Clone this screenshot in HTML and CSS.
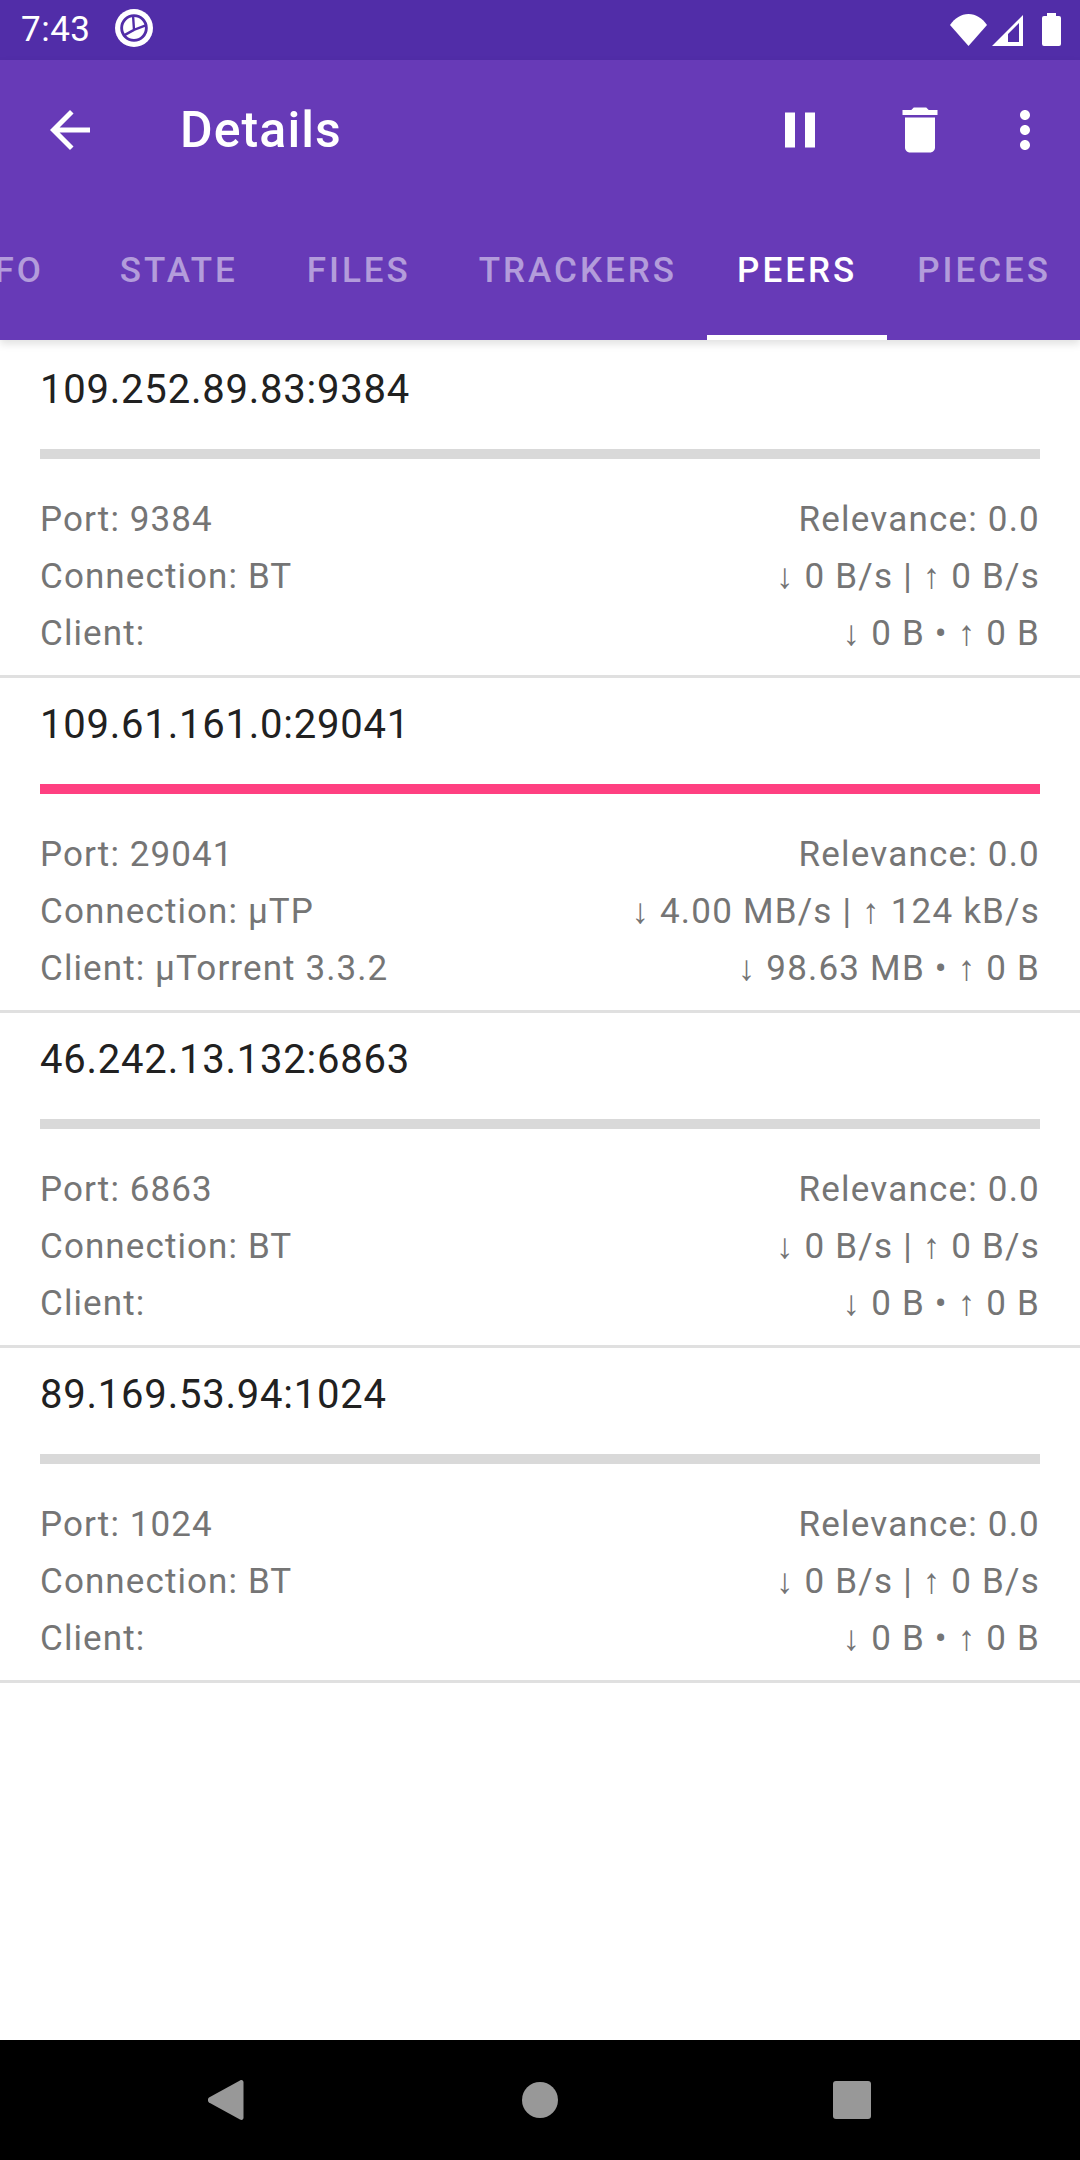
FILE: index.html
```html
<!DOCTYPE html>
<html lang="en">
<head>
    <meta charset="UTF-8">
    <meta name="viewport" content="width=device-width, initial-scale=1.0">
    <title>Details</title>
    <link rel="stylesheet" href="styles.css">
</head>
<body>
<div class="statusbar">
    <span class="time">7:43</span>
    <svg class="notif" viewBox="0 0 40 40"><circle cx="20" cy="20" r="20" fill="#fff"/><circle cx="20" cy="20" r="13" fill="none" stroke="#512da8" stroke-width="3"/><path d="M19 7l1 15 13-5M20 22L9 28" fill="none" stroke="#512da8" stroke-width="2.500"/></svg>
    <div class="status-right">
        <svg class="wifi" viewBox="0 0 37 32"><path d="M0 11C5 4 11 0 18.500 0S32 4 37 11L18.500 32z" fill="#fff"/></svg>
        <svg class="signal" viewBox="0 0 31 31"><path d="M0 31L31 0v31zM16 27h11V8L16 19z" fill="#fff" fill-rule="evenodd"/></svg>
        <svg class="battery" viewBox="0 0 19 33"><path d="M5 0h9v3h3a2 2 0 0 1 2 2v26a2 2 0 0 1-2 2H2a2 2 0 0 1-2-2V5a2 2 0 0 1 2-2h3z" fill="#fff"/></svg>
    </div>
</div>
<div class="appbar">
    <div class="toolbar">
        <svg class="icon back" viewBox="0 0 24 24"><path d="M20 11H7.830l5.590-5.590L12 4l-8 8 8 8 1.410-1.410L7.830 13H20z"/></svg>
        <span class="title">Details</span>
        <svg class="icon pause" viewBox="0 0 24 24"><path d="M6 19h4V5H6v14zm8-14v14h4V5h-4z"/></svg>
        <svg class="icon trash" viewBox="0 0 24 24"><path d="M6 19c0 1.100.9 2 2 2h8c1.100 0 2-.9 2-2V7H6v12zM19 4h-3.500l-1-1h-5l-1 1H5v2h14V4z"/></svg>
        <svg class="icon more" viewBox="0 0 24 24"><path d="M12 8c1.100 0 2-.9 2-2s-.9-2-2-2-2 .9-2 2 .9 2 2 2zm0 2c-1.100 0-2 .9-2 2s.9 2 2 2 2-.9 2-2-.9-2-2-2zm0 6c-1.100 0-2 .9-2 2s.9 2 2 2 2-.9 2-2-.9-2-2-2z"/></svg>
    </div>
    <div class="tabs">
        <div class="tab">INFO</div>
        <div class="tab">STATE</div>
        <div class="tab">FILES</div>
        <div class="tab">TRACKERS</div>
        <div class="tab active">PEERS</div>
        <div class="tab">PIECES</div>
    </div>
</div>
<div class="peers">
    <div class="peer">
        <div class="address">109.252.89.83:9384</div>
        <div class="bar"></div>
        <div class="info">
            <span>Port: 9384</span><span>Relevance: 0.0</span>
            <span>Connection: BT</span><span>↓ 0 B/s | ↑ 0 B/s</span>
            <span>Client:</span><span>↓ 0 B • ↑ 0 B</span>
        </div>
    </div>
    <div class="peer">
        <div class="address">109.61.161.0:29041</div>
        <div class="bar full"></div>
        <div class="info">
            <span>Port: 29041</span><span>Relevance: 0.0</span>
            <span>Connection: μTP</span><span>↓ 4.00 MB/s | ↑ 124 kB/s</span>
            <span>Client: μTorrent 3.3.2</span><span>↓ 98.63 MB • ↑ 0 B</span>
        </div>
    </div>
    <div class="peer">
        <div class="address">46.242.13.132:6863</div>
        <div class="bar"></div>
        <div class="info">
            <span>Port: 6863</span><span>Relevance: 0.0</span>
            <span>Connection: BT</span><span>↓ 0 B/s | ↑ 0 B/s</span>
            <span>Client:</span><span>↓ 0 B • ↑ 0 B</span>
        </div>
    </div>
    <div class="peer">
        <div class="address">89.169.53.94:1024</div>
        <div class="bar"></div>
        <div class="info">
            <span>Port: 1024</span><span>Relevance: 0.0</span>
            <span>Connection: BT</span><span>↓ 0 B/s | ↑ 0 B/s</span>
            <span>Client:</span><span>↓ 0 B • ↑ 0 B</span>
        </div>
    </div>
</div>
<div class="navbar">
    <svg class="nav-back" viewBox="0 0 36 40"><path d="M1 17.500L32 .5c2-1 3.500 0 3.500 2v35c0 2-1.500 3-3.500 2L1 22.500c-1.500-1-1.500-4 0-5z"/></svg>
    <div class="nav-home"></div>
    <div class="nav-recent"></div>
</div>
</body>
</html>
```

FILE: styles.css
```css
html, body {
    margin: 0;
    height: 2160px;
}
body {
    font-family: Roboto, sans-serif;
    display: flex;
    flex-direction: column;
    background-color: #fff;
    overflow: hidden;
}
.statusbar {
    height: 60px;
    flex-shrink: 0;
    display: flex;
    align-items: center;
    background-color: #512da8;
    color: #fff;
    padding-left: 21px;
}
.time {
    font-size: 35px;
    line-height: 60px;
    letter-spacing: 0.5px;
}
.notif {
    width: 38px;
    height: 38px;
    margin-left: 24px;
    margin-top: -4px;
}
.status-right {
    margin-left: auto;
    margin-right: 19px;
    margin-top: -1px;
    display: flex;
    align-items: flex-end;
}
.wifi {
    width: 37px;
    height: 32px;
}
.signal {
    width: 31px;
    height: 31px;
    margin-left: 5px;
}
.battery {
    width: 19px;
    height: 33px;
    margin-left: 19px;
}
.appbar {
    height: 280px;
    flex-shrink: 0;
    background-color: #673ab7;
    color: #fff;
    box-shadow: 0 4px 8px rgba(0, 0, 0, 0.12);
    position: relative;
}
.toolbar {
    height: 140px;
    display: flex;
    align-items: center;
    padding-left: 40px;
}
.icon {
    width: 60px;
    height: 60px;
    fill: #fff;
    flex-shrink: 0;
}
.title {
    font-size: 50px;
    font-weight: 500;
    letter-spacing: 1.1px;
    margin-left: 80px;
}
.pause {
    margin-left: auto;
}
.trash {
    margin-left: 60px;
}
.more {
    margin-left: 45px;
    margin-right: 25px;
}
.tabs {
    margin-top: 20px;
    margin-right: -1px;
    height: 120px;
    display: flex;
    justify-content: flex-end;
    overflow: hidden;
}
.tab {
    flex-shrink: 0;
    box-sizing: border-box;
    min-width: 180px;
    height: 120px;
    line-height: 102px;
    padding: 0 30px;
    text-align: center;
    font-size: 35px;
    font-weight: 500;
    letter-spacing: 3px;
    color: rgba(255, 255, 255, 0.5);
}
.tab.active {
    color: #fff;
    border-bottom: 5px solid #fff;
}
.peers {
    flex: 1;
    padding-top: 3px;
}
.peer {
    box-sizing: border-box;
    height: 335px;
    padding: 23px 40px 0;
    border-bottom: 3px solid #e0e0e0;
}
.address {
    font-size: 40px;
    line-height: 47px;
    letter-spacing: 0.78px;
    color: #212121;
}
.bar {
    height: 10px;
    margin-top: 36px;
    background-color: #d9d9d9;
}
.bar.full {
    background-color: #ff4081;
}
.info {
    margin-top: 32px;
    display: grid;
    grid-template-columns: auto auto;
    justify-content: space-between;
    font-size: 35px;
    line-height: 57px;
    letter-spacing: 1.1px;
    color: #757575;
}
.info span:nth-child(even) {
    text-align: right;
    letter-spacing: 1.2px;
}
.navbar {
    height: 120px;
    flex-shrink: 0;
    background-color: #000;
    position: relative;
}
.nav-back {
    position: absolute;
    left: 208px;
    top: 40px;
    width: 36px;
    height: 40px;
    fill: #989898;
}
.nav-home {
    position: absolute;
    left: 522px;
    top: 42px;
    width: 36px;
    height: 36px;
    border-radius: 50%;
    background-color: #989898;
}
.nav-recent {
    position: absolute;
    left: 833px;
    top: 41px;
    width: 38px;
    height: 38px;
    border-radius: 3px;
    background-color: #989898;
}
```
